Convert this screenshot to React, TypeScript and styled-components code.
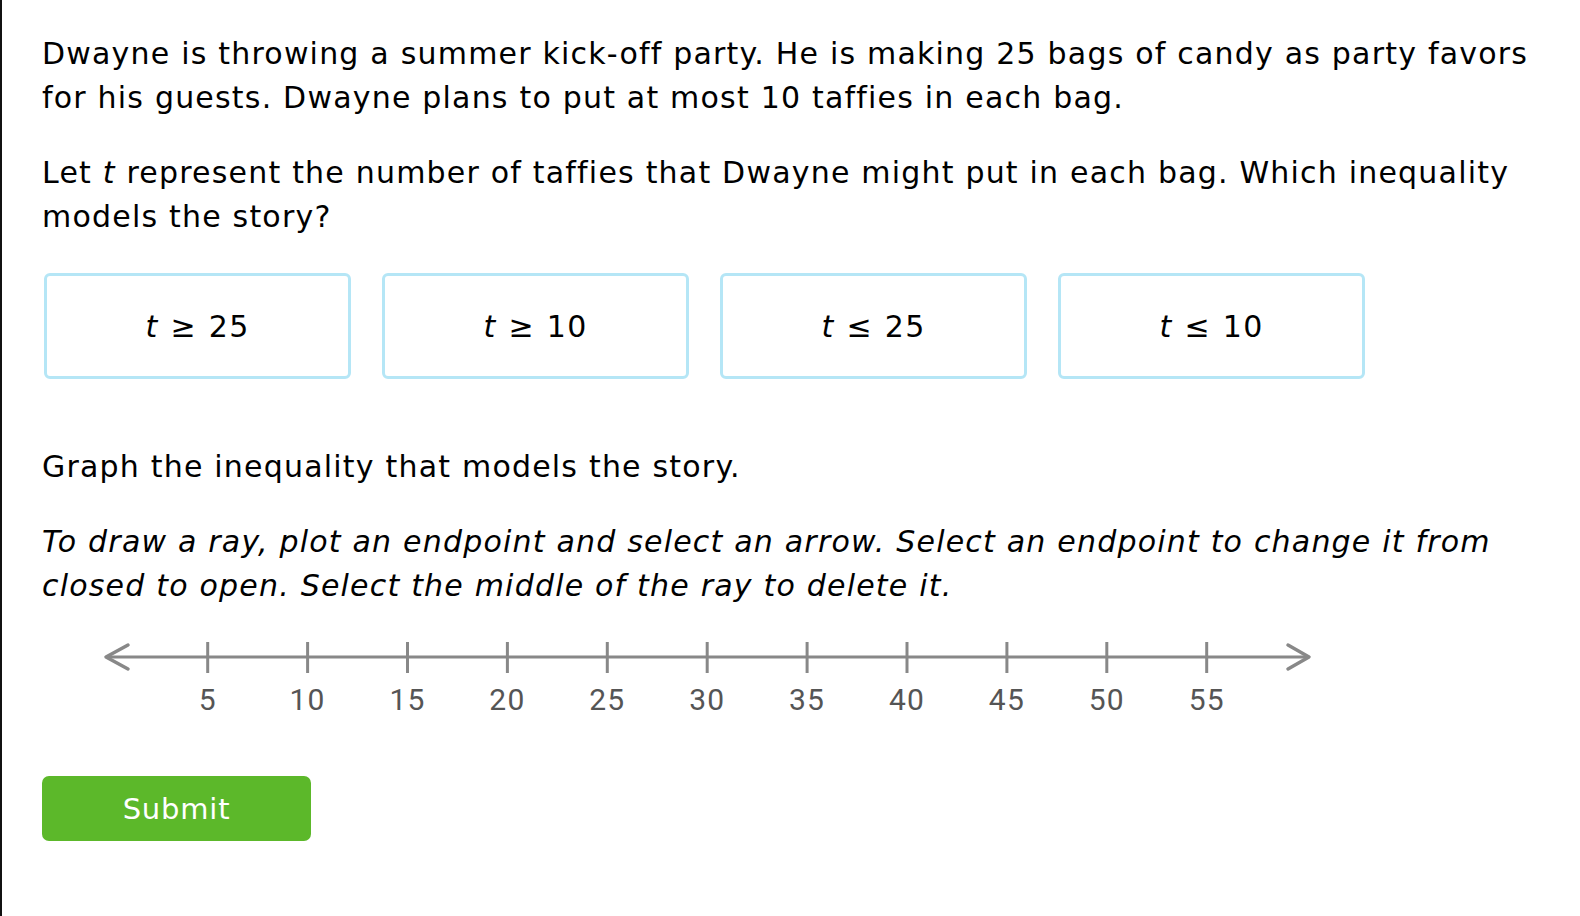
import React from "react";
import styled, { createGlobalStyle } from "styled-components";

const GlobalStyle = createGlobalStyle`
  html, body {
    margin: 0;
    padding: 0;
    background: #fff;
  }
`;

const Page = styled.div`
  min-height: 916px;
  box-sizing: border-box;
  border-left: 2px solid #111;
  padding: 32px 40px 0 40px;
  font-family: "DejaVu Sans", Verdana, sans-serif;
  font-size: 30px;
  line-height: 44px;
  letter-spacing: 1.2px;
  font-variant-ligatures: none;
  color: #000;
`;

const Para = styled.p<{ $gap?: number }>`
  margin: 0 0 ${(p) => p.$gap ?? 31}px 0;
`;

const Italic = styled(Para)`
  font-style: italic;
`;

const Var = styled.i`
  font-style: italic;
`;

const Choices = styled.div`
  display: flex;
  gap: 31px;
  margin: 0 0 66px 2px;
`;

const Choice = styled.button`
  width: 307px;
  height: 106px;
  box-sizing: border-box;
  border: 3px solid #b5e6f6;
  border-radius: 6px;
  background: #fff;
  font-family: inherit;
  font-size: 30px;
  letter-spacing: inherit;
  font-variant-ligatures: none;
  color: #000;
  display: flex;
  align-items: center;
  justify-content: center;
  gap: 12px;
  cursor: pointer;
`;

const LineWrap = styled.div`
  margin-top: 22px;
  height: 110px;
`;

const SubmitButton = styled.button`
  width: 269px;
  height: 65px;
  border: none;
  border-radius: 7px;
  background: #5cb82a;
  color: #fff;
  font-family: "DejaVu Sans", Verdana, sans-serif;
  font-size: 29px;
  letter-spacing: 0.8px;
  cursor: pointer;
  margin-top: 36px;
`;

const choices = [
  { op: "≥", n: 25 },
  { op: "≥", n: 10 },
  { op: "≤", n: 25 },
  { op: "≤", n: 10 },
];

const labels = [5, 10, 15, 20, 25, 30, 35, 40, 45, 50, 55];

const NumberLine = () => {
  const y = 27;
  const first = 165.7;
  const step = 99.9;
  return (
    <svg width="1300" height="110" viewBox="0 0 1300 110">
      <line x1={64} y1={y} x2={1267} y2={y} stroke="#888" strokeWidth={3} />
      <polyline
        points={`${86},${y - 12} ${64},${y} ${86},${y + 12}`}
        fill="none"
        stroke="#888"
        strokeWidth={3.5}
        strokeLinecap="round"
        strokeLinejoin="round"
      />
      <polyline
        points={`${1246},${y - 12} ${1267},${y} ${1246},${y + 12}`}
        fill="none"
        stroke="#888"
        strokeWidth={3.5}
        strokeLinecap="round"
        strokeLinejoin="round"
      />
      {labels.map((v, i) => {
        const x = first + i * step;
        return (
          <g key={v}>
            <line x1={x} y1={12} x2={x} y2={43} stroke="#888" strokeWidth={3} />
            <text
              x={x}
              y={80}
              textAnchor="middle"
              fontFamily="Roboto, sans-serif"
              fontSize={30}
              fill="#555"
            >
              {v}
            </text>
          </g>
        );
      })}
    </svg>
  );
};

export default function App() {
  return (
    <>
      <GlobalStyle />
      <Page>
        <Para>
          Dwayne is throwing a summer kick-off party. He is making 25 bags of
          candy as party favors for his guests. Dwayne plans to put at most 10
          taffies in each bag.
        </Para>
        <Para $gap={34}>
          Let <Var>t</Var> represent the number of taffies that Dwayne might put
          in each bag. Which inequality models the story?
        </Para>
        <Choices>
          {choices.map((c, i) => (
            <Choice key={i}>
              <Var>t</Var>
              <span>{c.op}</span>
              <span>{c.n}</span>
            </Choice>
          ))}
        </Choices>
        <Para>Graph the inequality that models the story.</Para>
        <Italic $gap={0}>
          To draw a ray, plot an endpoint and select an arrow. Select an
          endpoint to change it from closed to open. Select the middle of the
          ray to delete it.
        </Italic>
        <LineWrap>
          <NumberLine />
        </LineWrap>
        <SubmitButton>Submit</SubmitButton>
      </Page>
    </>
  );
}
